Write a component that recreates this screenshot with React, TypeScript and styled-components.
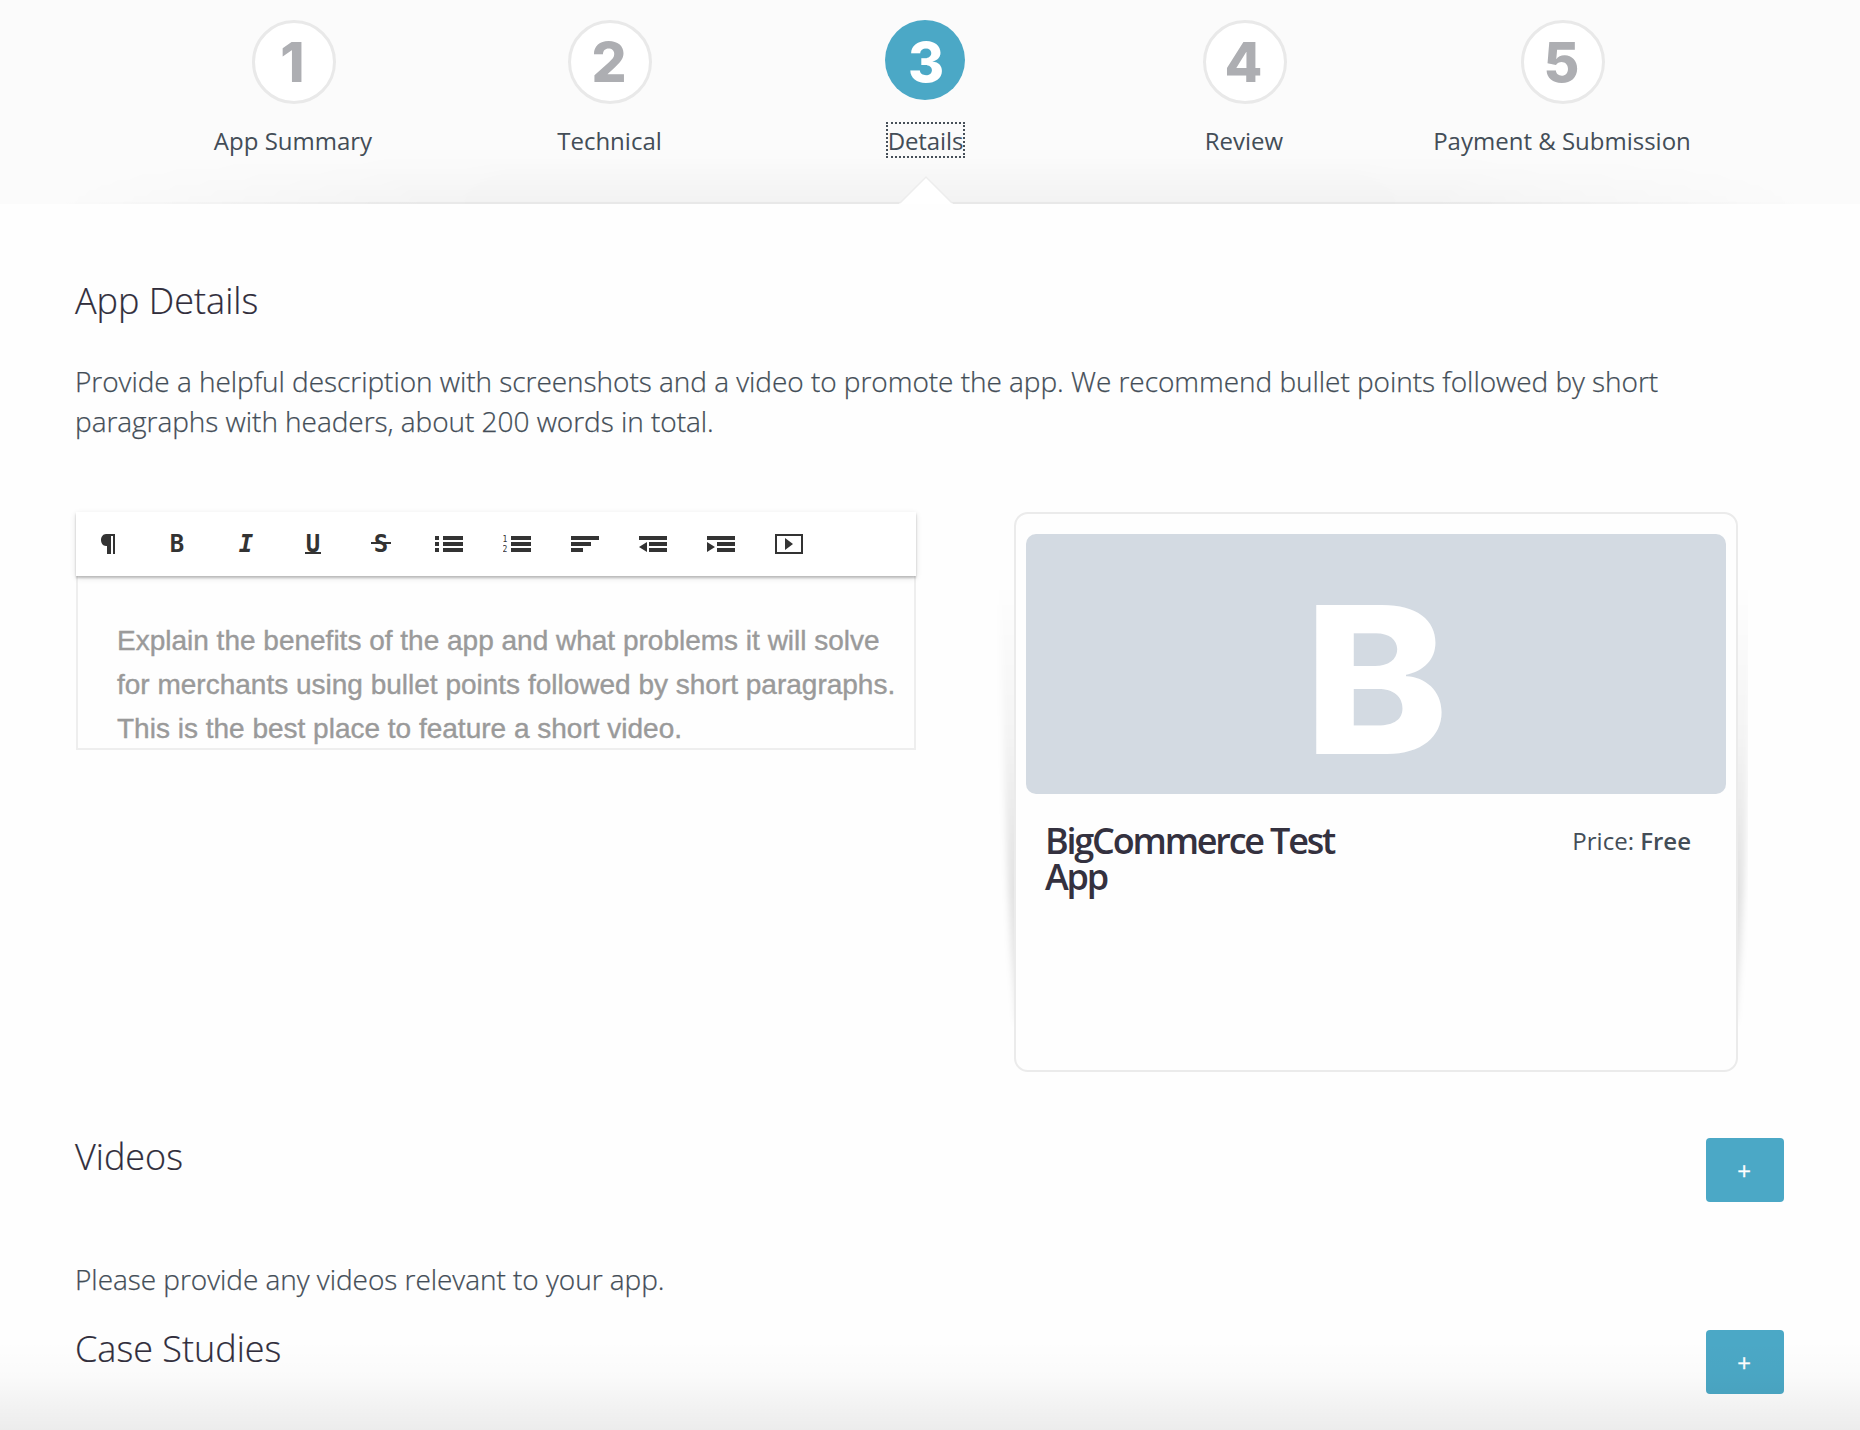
import React from "react";
import styled, { createGlobalStyle } from "styled-components";

const GlobalStyle = createGlobalStyle`
  * { box-sizing: border-box; }
  body {
    margin: 0;
    background: #fefefe;
    font-family: "Open Sans", "Noto Sans", sans-serif;
    color: #434d57;
  }
`;

const Page = styled.div`
  position: relative;
  width: 1860px;
  height: 1430px;
  overflow: hidden;
`;

const BottomFade = styled.div`
  position: absolute;
  inset: auto 0 0 0;
  height: 90px;
  pointer-events: none;
  background: linear-gradient(to bottom, rgba(0, 0, 0, 0) 0%, rgba(0, 0, 0, 0.015) 40%, rgba(0, 0, 0, 0.07) 100%);
`;

const Header = styled.header`
  position: relative;
  height: 204px;
  padding: 20px 0 0 134px;
  background: #fbfbfb;
  &::before {
    content: "";
    position: absolute;
    inset: auto 50px 0 50px;
    height: 48px;
    background: linear-gradient(to top, rgba(0, 0, 0, 0.036), rgba(0, 0, 0, 0.02) 45%, rgba(0, 0, 0, 0));
    mask-image: radial-gradient(ellipse 50% 220% at 50% 100%, #000 50%, transparent 100%);
  }
  &::after {
    content: "";
    position: absolute;
    inset: auto 0 0 0;
    height: 2px;
    background: linear-gradient(to right, rgba(0, 0, 0, 0) 50px, rgba(0, 0, 0, 0.045) 400px, rgba(0, 0, 0, 0.045) 1460px, rgba(0, 0, 0, 0) 1810px);
  }
`;

const Steps = styled.ol`
  display: grid;
  grid-template-columns: 317px 316px 317px 319px 317px;
  margin: 0;
  padding: 0;
  list-style: none;
`;

const StepItem = styled.li`
  display: flex;
  flex-direction: column;
  align-items: center;
`;

const Bubble = styled.div<{ $active?: boolean }>`
  display: flex;
  align-items: center;
  justify-content: center;
  width: ${(p) => (p.$active ? 80 : 84)}px;
  height: ${(p) => (p.$active ? 80 : 84)}px;
  margin: ${(p) => (p.$active ? "0 2px 22px 0" : "0 0 18px 2px")};
  padding: ${(p) => (p.$active ? "4px 0 0 3px" : "0 2px 0 0")};
  border-radius: 50%;
  border: ${(p) => (p.$active ? "none" : "3px solid #e9e9e9")};
  background: ${(p) => (p.$active ? "#4ba8c6" : "#fff")};
  color: ${(p) => (p.$active ? "#fff" : "#adaeb2")};
  font: 800 55px/1 Inter, Arial, sans-serif;
`;

const StepLabel = styled.span<{ $active?: boolean }>`
  padding: 2px 0 0 ${(p) => (p.$active ? 0 : 1)}px;
  border: 2px ${(p) => (p.$active ? "dotted #475059" : "solid transparent")};
  font-size: 24px;
  line-height: 30px;
  letter-spacing: ${(p) => (p.$active ? -0.1 : 0)}px;
  white-space: nowrap;
`;

const Notch = styled.svg`
  position: absolute;
  left: 899px;
  bottom: 0;
  z-index: 1;
`;

const Main = styled.main`
  padding: 72px 76px 0 75px;
`;

const Heading = styled.h2<{ $raised?: boolean }>`
  margin: ${(p) => (p.$raised ? -6 : 0)}px 0 0;
  font-size: 36px;
  font-weight: 300;
  line-height: 50px;
  color: #302d3b;
  -webkit-text-stroke: 0.2px #302d3b;
`;

const Lead = styled.p`
  margin: 0;
  font-size: 28px;
  font-weight: 300;
  line-height: 40px;
  letter-spacing: -0.04px;
  -webkit-text-stroke: 0.25px #434d57;
`;

const Intro = styled.div`
  display: flex;
  flex-direction: column;
  gap: 35px;
  width: 1640px;
`;

const Columns = styled.div`
  display: flex;
  gap: 98px;
  align-items: flex-start;
  margin: 71px 0 0 1px;
`;

const Editor = styled.section`
  width: 840px;
`;

const Toolbar = styled.div`
  position: relative;
  display: flex;
  gap: 4px;
  height: 64px;
  padding-left: 1px;
  background: #fff;
  box-shadow: 0 2px 6px rgba(0, 0, 0, 0.12), 0 2px 2px rgba(0, 0, 0, 0.2);
`;

const ToolButton = styled.button`
  display: flex;
  align-items: center;
  justify-content: center;
  width: 64px;
  height: 64px;
  padding: 0;
  border: 0;
  background: none;
  color: #333;
`;

const ToolLetter = styled.span<{ $italic?: boolean }>`
  position: relative;
  padding-left: ${(p) => (p.$italic ? 2 : 0)}px;
  font: ${(p) => (p.$italic ? "italic" : "normal")} bold 24px/28px "DejaVu Sans Mono", monospace;
`;

const Rule = styled.i<{ $top: number; $width: number }>`
  position: absolute;
  top: ${(p) => p.$top}px;
  left: 50%;
  width: ${(p) => p.$width}px;
  height: 2px;
  transform: translateX(-50%);
  background: #333;
`;

const EditorBody = styled.div`
  height: 174px;
  width: 840px;
  padding: 43px 0 0 39px;
  overflow: hidden;
  border: 2px solid #eee;
  border-top: 0;
  color: #9a9a9a;
  font: 28px/44px "Liberation Sans", Arial, sans-serif;
  -webkit-text-stroke: 0.4px #9a9a9a;
`;

const CardWrap = styled.div`
  position: relative;
`;

const SideShadow = styled.svg<{ $side: "left" | "right" }>`
  position: absolute;
  top: 40px;
  overflow: hidden;
  ${(p) => p.$side}: ${(p) => (p.$side === "left" ? -20 : -10)}px;
`;

const Card = styled.article`
  position: relative;
  width: 724px;
  height: 560px;
  padding: 20px 10px 0;
  background: #fefefe;
  border: 2px solid #ebebeb;
  border-radius: 14px;
`;

const Banner = styled.div`
  display: flex;
  justify-content: center;
  height: 260px;
  border-radius: 10px;
  background: #d3dae2;
  color: #fff;
  font: 800 205px/290px Inter, Arial, sans-serif;
`;

const Initial = styled.span`
  transform: scaleX(1.06);
`;

const CardInfo = styled.div`
  display: flex;
  justify-content: space-between;
  padding: 29px 35px 0 19px;
`;

const AppName = styled.h3`
  width: 330px;
  margin: 0;
  font-size: 36px;
  font-weight: 600;
  line-height: 36px;
  letter-spacing: -2.2px;
  color: #34313f;
`;

const Price = styled.div`
  font-size: 24px;
  line-height: 36px;
  b { font-weight: 600; }
`;

const SectionRow = styled.div`
  display: flex;
  justify-content: space-between;
  height: 64px;
`;

const Videos = styled.section`
  display: flex;
  flex-direction: column;
  gap: 57px;
  margin: 66px 0 31px;
`;

const AddButton = styled.button`
  display: flex;
  align-items: center;
  justify-content: center;
  width: 78px;
  height: 64px;
  padding: 2px 2px 0 0;
  border: 0;
  border-radius: 4px;
  background: #4ba8c6;
  color: #fff;
  font: 400 24px/1 "Open Sans", sans-serif;
  -webkit-text-stroke: 0.3px #fff;
`;

const Icon = ({ children }: { children: React.ReactNode }) => (
  <svg width="28" height="20" viewBox="0 0 28 20" fill="#333">{children}</svg>
);

const steps = ["App Summary", "Technical", "Details", "Review", "Payment & Submission"];
const ACTIVE = 2;

const tools: { name: string; icon: React.ReactNode }[] = [
  { name: "Paragraph", icon: <Icon><path d="M11 0H20V20H18V2H16V20H12V12H11C8 12 6 9 6 6S8 0 11 0Z" /></Icon> },
  { name: "Bold", icon: <ToolLetter>B</ToolLetter> },
  { name: "Italic", icon: <ToolLetter $italic>I</ToolLetter> },
  { name: "Underline", icon: <ToolLetter>U<Rule $top={22} $width={16} /></ToolLetter> },
  { name: "Strikethrough", icon: <ToolLetter>S<Rule $top={12} $width={20} /></ToolLetter> },
  { name: "Bulleted list", icon: <Icon><path d="M0 2h4v4H0zM8 2h20v4H8zM0 8h4v4H0zM8 8h20v4H8zM0 14h4v4H0zM8 14h20v4H8z" /></Icon> },
  {
    name: "Numbered list",
    icon: (
      <Icon>
        <path d="M8 2h20v4H8zM8 8h20v4H8zM8 14h20v4H8z" />
        <text x="-0.5" y="8" fontSize="8" fontFamily="DejaVu Sans Mono">1</text>
        <text x="-0.5" y="18" fontSize="8" fontFamily="DejaVu Sans Mono">2</text>
      </Icon>
    ),
  },
  { name: "Align", icon: <Icon><path d="M0 2h28v4H0zM0 8h20v4H0zM0 14h12v4H0z" /></Icon> },
  { name: "Outdent", icon: <Icon><path d="M0 2h28v4H0zM10 8h18v4H10zM10 14h18v4H10zM8 8v10L0 13z" /></Icon> },
  { name: "Indent", icon: <Icon><path d="M0 2h28v4H0zM10 8h18v4H10zM10 14h18v4H10zM0 8v10l8-5z" /></Icon> },
  { name: "Video", icon: <Icon><path fillRule="evenodd" d="M0 0h28v20H0zM2 2v16h24V2zM10 4v12l8-6z" /></Icon> },
];

export default function App() {
  return (
    <Page>
      <GlobalStyle />
      <Header>
        <Steps>
          {steps.map((label, i) => (
            <StepItem key={label}>
              <Bubble $active={i === ACTIVE}>{i + 1}</Bubble>
              <StepLabel $active={i === ACTIVE}>{label}</StepLabel>
            </StepItem>
          ))}
        </Steps>
        <Notch width="54" height="28" viewBox="0 0 54 28">
          <path d="M0 28L27 0L54 28Z" fill="#fff" />
          <path d="M1 27L27 1L53 27" fill="none" stroke="#ededed" strokeWidth="1.5" />
        </Notch>
      </Header>
      <Main>
        <Intro>
          <Heading>App Details</Heading>
          <Lead>
            Provide a helpful description with screenshots and a video to promote the app. We recommend bullet points
            followed by short paragraphs with headers, about 200 words in total.
          </Lead>
        </Intro>
        <Columns>
          <Editor>
            <Toolbar>
              {tools.map((t) => (
                <ToolButton key={t.name} aria-label={t.name}>{t.icon}</ToolButton>
              ))}
            </Toolbar>
            <EditorBody>
              Explain the benefits of the app and what problems it will solve
              <br />
              for merchants using bullet points followed by short paragraphs.
              <br />
              This is the best place to feature a short video.
            </EditorBody>
          </Editor>
          <CardWrap>
            <SideShadow $side="left" width="40" height="500">
              <defs>
                <linearGradient id="shade" gradientUnits="userSpaceOnUse" x1="0" y1="30" x2="0" y2="470">
                  <stop offset="0" stopColor="#000" stopOpacity="0" />
                  <stop offset="0.35" stopColor="#000" stopOpacity="0.04" />
                  <stop offset="0.7" stopColor="#000" stopOpacity="0.11" />
                  <stop offset="1" stopColor="#000" stopOpacity="0.08" />
                </linearGradient>
                <filter id="soft" x="-50%" width="200%">
                  <feGaussianBlur stdDeviation="3 4" />
                </filter>
              </defs>
              <path d="M4 10L10 210L13 310L17 400L22 470H60V10Z" fill="url(#shade)" filter="url(#soft)" />
            </SideShadow>
            <SideShadow $side="right" width="30" height="500">
              <path d="M36 10L30 210L27 310L23 400L18 470H-20V10Z" fill="url(#shade)" filter="url(#soft)" />
            </SideShadow>
            <Card>
              <Banner><Initial>B</Initial></Banner>
              <CardInfo>
                <AppName>BigCommerce Test App</AppName>
                <Price>Price: <b>Free</b></Price>
              </CardInfo>
            </Card>
          </CardWrap>
        </Columns>
        <Videos>
          <SectionRow>
            <Heading $raised>Videos</Heading>
            <AddButton aria-label="Add video">+</AddButton>
          </SectionRow>
          <Lead>Please provide any videos relevant to your app.</Lead>
        </Videos>
        <SectionRow>
          <Heading $raised>Case Studies</Heading>
          <AddButton aria-label="Add case study">+</AddButton>
        </SectionRow>
      </Main>
      <BottomFade />
    </Page>
  );
}
